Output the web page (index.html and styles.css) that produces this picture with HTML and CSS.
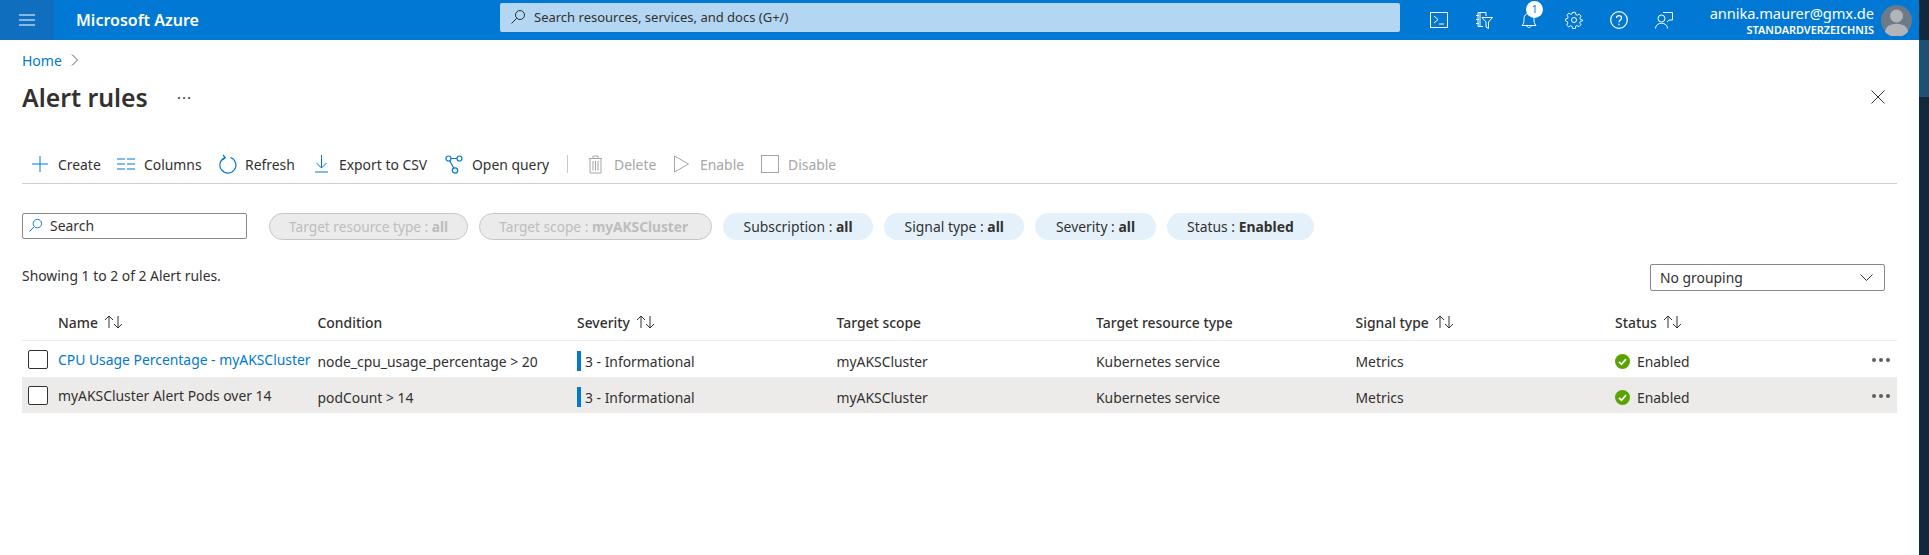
FILE: index.html
```html
<!DOCTYPE html>
<html lang="en">
<head>
    <meta charset="UTF-8">
    <title>Alert rules - Microsoft Azure</title>
    <link rel="stylesheet" href="styles.css">
</head>
<body>
    <div class="page">
        <header class="topbar">
            <div class="menu-btn">
                <svg width="16" height="12" viewBox="0 0 16 12"><path d="M0 1h16M0 6h16M0 11h16" stroke="#fff" stroke-width="1"/></svg>
            </div>
            <div class="brand">Microsoft Azure</div>
            <div class="top-search">
                <svg width="16" height="16" viewBox="0 0 16 16" fill="none" stroke="#323130"><circle cx="10" cy="6" r="4.5"/><path d="M6.7 9.300 1.500 14.500"/></svg>
                <span>Search resources, services, and docs (G+/)</span>
            </div>
            <div class="top-icons">
                <svg width="18" height="18" viewBox="0 0 18 18" fill="none" stroke="#fff"><rect x=".5" y="1.500" width="17" height="15"/><path d="m4 5 4 3.500L4 12M9 13h5"/></svg>
                <svg width="18" height="18" viewBox="0 0 18 18" fill="none" stroke="#fff"><path d="M8 15.500H3V1.500h8V5M1 4.500h3M1 8.500h3M1 12.500h3M5 1.500v14"/><path d="M7 6.500h10.500l-4 4.500v6.500l-2.500-1.500v-5z"/></svg>
                <div class="bell">
                    <svg width="18" height="18" viewBox="0 0 18 18" fill="none" stroke="#fff"><path d="M2 14.500h14c-2-2-2-4-2-7 0-3-2-5-5-5s-5 2-5 5c0 3 0 5-2 7zM7 15c0 2 4 2 4 0"/></svg>
                    <span class="badge">1</span>
                </div>
                <svg width="18" height="18" viewBox="0 0 18 18" fill="none" stroke="#fff"><circle cx="9" cy="9" r="2.500"/><path d="M7.500 1h3l.5 2.300 1.500.7 2-1.200 2 2.200-1.200 2 .6 1.500L18 9v1l-2.300.6-.6 1.500 1.200 2-2 2-2-1.200-1.500.6L10.500 18h-3l-.6-2.300-1.500-.6-2 1.200-2-2 1.200-2-.6-1.500L0 10V8l2.300-.5.6-1.500-1.200-2 2-2.200 2 1.200 1.500-.7z" transform="translate(.4 .4) scale(.95)"/></svg>
                <svg width="18" height="18" viewBox="0 0 18 18" fill="none" stroke="#fff" stroke-width="1.200"><circle cx="9" cy="9" r="8.300"/><path d="M6.500 7c0-3.300 5-3.300 5 0 0 2-2.500 2-2.500 4.300"/><path d="M9 12.800v1.400"/></svg>
                <svg width="18" height="18" viewBox="0 0 18 18" fill="none" stroke="#fff"><path d="M8 1.500h9.500V9H14l-2 2"/><circle cx="6.500" cy="7.500" r="3.500"/><path d="M.5 17.500c0-7 12-7 12 0"/></svg>
            </div>
            <div class="account">
                <div class="account-text">
                    <div class="account-mail">annika.maurer@gmx.de</div>
                    <div class="account-dir">STANDARDVERZEICHNIS</div>
                </div>
                <svg class="avatar" width="31" height="31" viewBox="0 0 31 31"><circle cx="15.500" cy="15.500" r="15.500" fill="#6d7a88"/><circle cx="15.500" cy="11" r="6.500" fill="#b1b5ba"/><path d="M4 27c0-11 23-11 23 0a15.500 15.500 0 0 1-23 0z" fill="#b1b5ba"/></svg>
            </div>
        </header>

        <main class="content">
            <nav class="breadcrumb">
                <a>Home</a>
                <svg width="8" height="12" viewBox="0 0 8 12" fill="none" stroke="#605e5c"><path d="m1 .5 5.500 5.500L1 11.500"/></svg>
            </nav>

            <div class="title-row">
                <h1>Alert rules</h1>
                <span class="title-more">···</span>
                <svg class="close" width="14" height="14" viewBox="0 0 14 14" fill="none" stroke="#323130"><path d="m.5.500 13 13M13.500.500l-13 13"/></svg>
            </div>

            <div class="toolbar">
                <button class="tool tool-create">
                    <svg width="18" height="18" viewBox="0 0 18 18" fill="none" stroke="#0078d4"><path d="M9 1v16M1 9h16"/></svg>Create
                </button>
                <button class="tool tool-columns">
                    <svg width="18" height="12" viewBox="0 0 18 12" fill="none" stroke="#0078d4"><path d="M0 1h8M10 1h8M0 6h8M10 6h8M0 11h8M10 11h8"/></svg>Columns
                </button>
                <button class="tool tool-refresh">
                    <svg width="18" height="20" viewBox="0 0 18 20" fill="none" stroke="#0078d4" stroke-width="1.200"><path d="M11.500 3.500a8 8 0 1 1-5.500.1M4 1l2.300 2.600L3.500 6"/></svg>Refresh
                </button>
                <button class="tool tool-export">
                    <svg width="13" height="18" viewBox="0 0 13 18" fill="none" stroke="#0078d4"><path d="M6.500 0v13M1.500 8l5 5 5-5M0 17h13"/></svg>Export to CSV
                </button>
                <button class="tool tool-query">
                    <svg width="18" height="19" viewBox="0 0 18 19" fill="none" stroke="#0078d4" stroke-width="1.200"><circle cx="3.500" cy="3.500" r="2.500"/><circle cx="14.500" cy="3.500" r="2.500"/><circle cx="10" cy="15.500" r="2.700"/><path d="M6 3.500h6M4.700 5.700l4.200 7.500"/></svg>Open query
                </button>
                <span class="tool-sep"></span>
                <button class="tool tool-delete off">
                    <svg width="15" height="19" viewBox="0 0 15 19" fill="none" stroke="#a6a6a6"><path d="M1 3.500h13M5 3.500V1h5v2.500M2 3.500V18h11V3.500M5 6v9.500M7.500 6v9.500M10 6v9.500"/></svg>Delete
                </button>
                <button class="tool tool-enable off">
                    <svg width="15" height="18" viewBox="0 0 15 18" fill="none" stroke="#a6a6a6"><path d="M.5 1v16l14-8z"/></svg>Enable
                </button>
                <button class="tool tool-disable off">
                    <svg width="18" height="18" viewBox="0 0 18 18" fill="none" stroke="#a6a6a6"><rect x=".5" y=".5" width="17" height="17"/></svg>Disable
                </button>
            </div>

            <div class="filters">
                <div class="search-box">
                    <svg width="15" height="15" viewBox="0 0 16 16" fill="none" stroke="#0078d4"><circle cx="10" cy="6" r="4.500"/><path d="M6.700 9.300 1.500 14.500"/></svg>
                    <span>Search</span>
                </div>
                <div class="pills">
                    <span class="pill pill-off">Target resource type : <b>all</b></span>
                    <span class="pill pill-off pill-scope">Target scope : <b>myAKSCluster</b></span>
                    <span class="pill">Subscription : <b>all</b></span>
                    <span class="pill">Signal type : <b>all</b></span>
                    <span class="pill">Severity : <b>all</b></span>
                    <span class="pill">Status : <b>Enabled</b></span>
                </div>
            </div>

            <div class="summary-row">
                <span class="summary">Showing 1 to 2 of 2 Alert rules.</span>
                <div class="group-select">
                    <span>No grouping</span>
                    <svg width="13" height="7" viewBox="0 0 13 7" fill="none" stroke="#323130"><path d="m.5.500 6 6 6-6"/></svg>
                </div>
            </div>

            <div class="grid">
                <div class="row head">
                    <div class="cell first">Name <svg class="sort" width="19" height="14" viewBox="0 0 19 14" fill="none" stroke="#323130"><path d="M5 13V1M1 5l4-4 4 4M14 1v12M10 9l4 4 4-4"/></svg></div>
                    <div class="cell">Condition</div>
                    <div class="cell">Severity <svg class="sort" width="19" height="14" viewBox="0 0 19 14" fill="none" stroke="#323130"><path d="M5 13V1M1 5l4-4 4 4M14 1v12M10 9l4 4 4-4"/></svg></div>
                    <div class="cell">Target scope</div>
                    <div class="cell">Target resource type</div>
                    <div class="cell">Signal type <svg class="sort" width="19" height="14" viewBox="0 0 19 14" fill="none" stroke="#323130"><path d="M5 13V1M1 5l4-4 4 4M14 1v12M10 9l4 4 4-4"/></svg></div>
                    <div class="cell">Status <svg class="sort" width="19" height="14" viewBox="0 0 19 14" fill="none" stroke="#323130"><path d="M5 13V1M1 5l4-4 4 4M14 1v12M10 9l4 4 4-4"/></svg></div>
                </div>

                <div class="row">
                    <div class="cell first"><span class="check"></span><a class="name link">CPU Usage Percentage - myAKSCluster</a></div>
                    <div class="cell">node_cpu_usage_percentage &gt; 20</div>
                    <div class="cell"><span class="sev-bar"></span>3 - Informational</div>
                    <div class="cell">myAKSCluster</div>
                    <div class="cell">Kubernetes service</div>
                    <div class="cell">Metrics</div>
                    <div class="cell status">
                        <svg width="15" height="15" viewBox="0 0 15 15"><circle cx="7.500" cy="7.500" r="7.500" fill="#57a300"/><path d="m4 7.800 2.500 2.500L11 5.200" fill="none" stroke="#fff" stroke-width="1.800"/></svg>
                        Enabled
                        <span class="row-more"><i></i><i></i><i></i></span>
                    </div>
                </div>

                <div class="row selected">
                    <div class="cell first"><span class="check"></span><a class="name">myAKSCluster Alert Pods over 14</a></div>
                    <div class="cell">podCount &gt; 14</div>
                    <div class="cell"><span class="sev-bar"></span>3 - Informational</div>
                    <div class="cell">myAKSCluster</div>
                    <div class="cell">Kubernetes service</div>
                    <div class="cell">Metrics</div>
                    <div class="cell status">
                        <svg width="15" height="15" viewBox="0 0 15 15"><circle cx="7.500" cy="7.500" r="7.500" fill="#57a300"/><path d="m4 7.800 2.500 2.500L11 5.200" fill="none" stroke="#fff" stroke-width="1.800"/></svg>
                        Enabled
                        <span class="row-more"><i></i><i></i><i></i></span>
                    </div>
                </div>
            </div>
        </main>

        <div class="side-strip"><div class="side-thumb"></div></div>
    </div>
</body>
</html>
```

FILE: styles.css
```css
* {
    box-sizing: border-box;
}

html, body {
    margin: 0;
    height: 100%;
    overflow: hidden;
}

body {
    font-family: 'Noto Sans', 'Open Sans', sans-serif;
    font-size: 13.9px;
    color: #323130;
    background: white;
}

.page {
    position: relative;
    height: 555px;
    padding-right: 10px;
}

.topbar {
    height: 40px;
    background: #0078d4;
    display: flex;
    align-items: center;
    color: white;
}

.menu-btn {
    width: 54px;
    height: 40px;
    background: #106ebe;
    display: flex;
    align-items: center;
    justify-content: center;
    margin-right: 22px;
}

.brand {
    width: 424px;
    font-size: 16px;
    font-weight: 600;
}

.top-search {
    width: 900px;
    height: 29px;
    margin-top: -6px;
    background: #b3d6f2;
    border-radius: 2px;
    display: flex;
    align-items: center;
    padding-left: 10px;
    gap: 8px;
    color: #323130;
    font-size: 13px;
}

.top-icons {
    display: flex;
    align-items: center;
    gap: 27px;
    margin-left: 30px;
}

.bell {
    position: relative;
    height: 18px;
}

.badge {
    position: absolute;
    left: 6px;
    top: -10px;
    width: 17px;
    height: 17px;
    border-radius: 50%;
    background: white;
    color: #0078d4;
    font-size: 10px;
    line-height: 17px;
    text-align: center;
}

.account {
    display: flex;
    align-items: center;
    margin-left: auto;
    margin-right: 7px;
    gap: 7px;
}

.account-text {
    text-align: right;
}

.account-mail {
    font-size: 14.700px;
    line-height: 20px;
    letter-spacing: -0.1px;
}

.account-dir {
    font-size: 10.900px;
    font-weight: 600;
    line-height: 14px;
}

.avatar {
    display: block;
}

.content {
    padding: 0 22px;
}

.breadcrumb {
    height: 22px;
    margin-top: 9px;
    display: flex;
    align-items: center;
    gap: 9px;
    font-size: 14px;
}

.breadcrumb a {
    color: #0078d4;
}

.title-row {
    height: 44px;
    margin-top: 4px;
    display: flex;
    align-items: center;
}

h1 {
    margin: 0;
    font-size: 24.800px;
    font-weight: 600;
    width: 155px;
}

.title-more {
    font-size: 15px;
    letter-spacing: 1px;
}

.close {
    margin-left: auto;
    margin-right: 12px;
}

.toolbar {
    height: 65px;
    padding: 27px 0 1px 9px;
    border-bottom: 1px solid #d2d0ce;
    display: flex;
    align-items: center;
}

.tool {
    border: 0;
    padding: 0;
    background: none;
    font: inherit;
    color: #323130;
    display: flex;
    align-items: center;
    gap: 10px;
    white-space: nowrap;
}

.tool.off {
    color: #a6a6a6;
}

.tool-create { width: 86px; gap: 9px; }
.tool-columns { width: 102px; gap: 9px; }
.tool-refresh { width: 96px; gap: 8px; }
.tool-export { width: 130px; gap: 11px; }
.tool-query { width: 122px; gap: 9px; }
.tool-delete { width: 86px; gap: 11px; }
.tool-enable { width: 87px; gap: 11px; }
.tool-disable { gap: 9px; }

.tool-sep {
    width: 1px;
    height: 18px;
    background: #c8c6c4;
    margin-right: 20px;
}

.filters {
    margin-top: 29px;
    display: flex;
    align-items: center;
}

.search-box {
    width: 225px;
    height: 26px;
    margin-top: -2px;
    border: 1px solid #8a8886;
    border-radius: 2px;
    display: flex;
    align-items: center;
    gap: 7px;
    padding-left: 5px;
}

.pills {
    display: flex;
    gap: 11px;
    margin-left: 22px;
}

.pill {
    height: 27px;
    padding: 0 20.500px;
    border-radius: 14px;
    background: #e5f1fa;
    display: flex;
    align-items: center;
    white-space: pre;
}

.pill b {
    font-weight: 700;
}

.pill-off {
    padding: 0 19px;
    font-size: 13.700px;
    background: #ebebeb;
    border: 1px solid #c8c6c4;
    color: #bdbdbd;
}

.pill-scope {
    padding-right: 23px;
}

.summary-row {
    margin-top: 24px;
    height: 27px;
    display: flex;
    align-items: center;
    justify-content: space-between;
}

.summary {
    margin-top: -5px;
}

.group-select {
    width: 235px;
    height: 27px;
    margin-right: 12px;
    border: 1px solid #8a8886;
    border-radius: 2px;
    display: flex;
    align-items: center;
    justify-content: space-between;
    padding: 0 11px 0 9px;
}

.grid {
    margin-top: 13px;
}

.row {
    display: grid;
    grid-template-columns: 295.5px repeat(5, 259.5px) 1fr;
    height: 36px;
    padding-top: 4px;
    align-items: center;
}

.row.head {
    height: 37px;
    padding-top: 0;
    border-bottom: 1px solid #edebe9;
    font-weight: 500;
}

.row.selected {
    background: #edebe9;
}

.cell {
    display: flex;
    align-items: center;
    white-space: nowrap;
    min-width: 0;
}

.cell.first {
    padding-left: 36px;
}

.row:not(.head) .cell.first {
    padding-left: 6px;
    gap: 10px;
}

.sort {
    margin-left: 6px;
}

.check {
    width: 20px;
    height: 19px;
    margin-top: -4px;
    border: 1px solid #323130;
    border-radius: 2px;
    background: white;
}

.name {
    margin-top: -4px;
}

.link {
    color: #0078d4;
}

.sev-bar {
    width: 4px;
    height: 20px;
    background: #0078d4;
    margin-right: 4px;
}

.status {
    gap: 7px;
    position: relative;
}

.row-more {
    position: absolute;
    right: 7px;
    top: 6px;
    display: flex;
    gap: 3px;
}

.row-more i {
    width: 4px;
    height: 4px;
    border-radius: 50%;
    background: #605e5c;
}

.side-strip {
    position: absolute;
    top: 0;
    right: 0;
    width: 10px;
    height: 100%;
    background: #12293d;
}

.side-thumb {
    margin-top: 40px;
    height: 57px;
    background: #1c5074;
}
```
